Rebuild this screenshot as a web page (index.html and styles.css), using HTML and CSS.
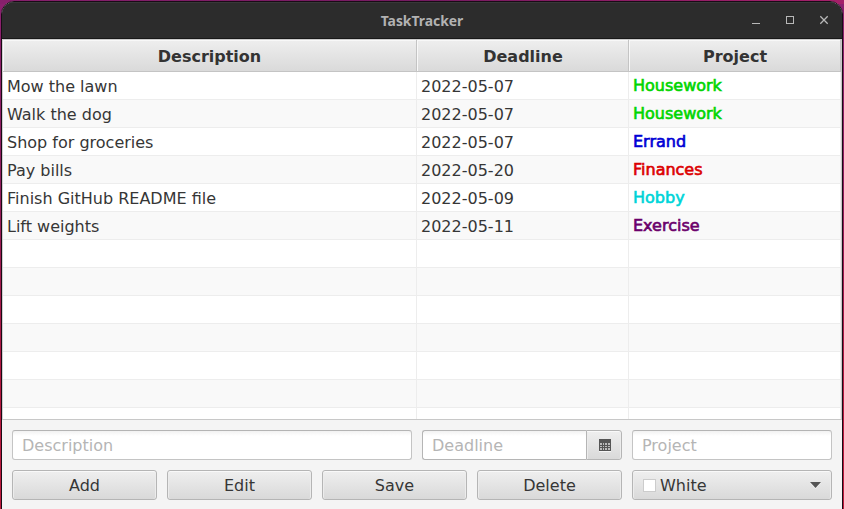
FILE: index.html
```
<!DOCTYPE html>
<html lang="en">
<head>
<meta charset="utf-8">
<title>TaskTracker</title>
<link rel="stylesheet" href="styles.css">
</head>
<body>
<div class="window">
  <header class="titlebar">
    <div class="title">TaskTracker</div>
    <svg class="controls" width="90" height="20" viewBox="0 0 90 20">
      <path d="M7 12.500h8" />
      <rect x="41.500" y="5.500" width="7" height="7" />
      <path class="close" d="M75.300 5.300l7.400 7.400M82.700 5.300l-7.400 7.400" />
    </svg>
  </header>
  <main class="content">
    <div class="table">
      <div class="row head"><div>Description</div><div>Deadline</div><div>Project</div></div>
      <div class="row"><div>Mow the lawn</div><div>2022-05-07</div><div class="tag green">Housework</div></div>
      <div class="row"><div>Walk the dog</div><div>2022-05-07</div><div class="tag green">Housework</div></div>
      <div class="row"><div>Shop for groceries</div><div>2022-05-07</div><div class="tag blue">Errand</div></div>
      <div class="row"><div>Pay bills</div><div>2022-05-20</div><div class="tag red">Finances</div></div>
      <div class="row"><div>Finish GitHub README file</div><div>2022-05-09</div><div class="tag cyan">Hobby</div></div>
      <div class="row"><div>Lift weights</div><div>2022-05-11</div><div class="tag purple">Exercise</div></div>
      <div class="row"><div></div><div></div><div></div></div>
      <div class="row"><div></div><div></div><div></div></div>
      <div class="row"><div></div><div></div><div></div></div>
      <div class="row"><div></div><div></div><div></div></div>
      <div class="row"><div></div><div></div><div></div></div>
      <div class="row"><div></div><div></div><div></div></div>
      <div class="row"><div></div><div></div><div></div></div>
    </div>
    <div class="form">
      <div class="fields">
        <div class="field">Description</div>
        <div class="date">
          <div class="field">Deadline</div>
          <div class="picker">
            <svg width="12" height="13" viewBox="0 0 12 13">
              <path class="shine" d="M0 12h12v1H0z" />
              <path class="cal" d="M0 0h12v12H0z" />
              <path class="days" d="M1 4h2v2H1zM4 4h1v2H4zM6 4h2v2H6zM9 4h2v2H9zM1 7h2v1H1zM4 7h1v1H4zM6 7h2v1H6zM9 7h2v1H9zM1 9h2v2H1zM4 9h1v2H4zM6 9h2v2H6zM9 9h2v2H9z" />
            </svg>
          </div>
        </div>
        <div class="field">Project</div>
      </div>
      <div class="actions">
        <div class="button">Add</div>
        <div class="button">Edit</div>
        <div class="button">Save</div>
        <div class="button">Delete</div>
        <div class="button combo"><span class="swatch"></span><span>White</span>
          <svg class="arrow" width="11" height="7" viewBox="0 0 11 7"><path class="shine" d="M0 1h11L5.500 7z"/><path class="tri" d="M0 0h11L5.500 6z"/></svg>
        </div>
      </div>
    </div>
  </main>
</div>
</body>
</html>
```
FILE: styles.css
```
* { box-sizing: border-box; }
body {
  margin: 0;
  height: 509px;
  overflow: hidden;
  padding: 1px 1px 0;
  background: linear-gradient(90deg, #87206c, #751b61 50%, #a52069) 0 0 / 100% 4px no-repeat,
    linear-gradient(180deg, #8b2170, #8f1c5c 35%, #b3173f 75%, #bd1a3c);
  font: 16px/28px "DejaVu Sans", sans-serif;
  color: #363636;
}
.window {
  height: 520px;
  border: 1px solid #190b16;
  border-radius: 13px 13px 0 0;
  overflow: hidden;
  background: #f4f4f4;
}
.titlebar {
  height: 37px;
  display: grid;
  grid-template-columns: 90px 1fr 90px;
  align-items: center;
  background: #2c2c2c;
  border-top: 1px solid #383838;
  border-bottom: 1px solid #181818;
}
.title {
  grid-column: 2;
  text-align: center;
  font: bold 13.900px/20px "Noto Sans", sans-serif;
  color: #b2b2b2;
}
.controls { fill: none; stroke: #b8b8b8; stroke-width: 1; margin-left: -7px; }
.close { stroke-width: 1.300; }
.table {
  height: 381px;
  overflow: hidden;
  border: 1px solid #c8c8c8;
  border-left-color: #d0d0d0;
  border-top: 0;
  background: #fff;
}
.row {
  height: 28px;
  display: grid;
  grid-template-columns: 414px 212px 212px;
  grid-template-rows: 100%;
  line-height: 24px;
}
.row > div {
  padding: 3px 0 0 4px;
  border-right: 1px solid #ededed;
  border-bottom: 1px solid #ededed;
}
.row:nth-child(odd) { background: #f9f9f9; }
.row.head {
  height: 33px;
  font-weight: bold;
  color: #333;
  background: linear-gradient(#efefef, #d9d9d9);
}
.row.head > div {
  padding: 5px 0 0;
  text-align: center;
  border-right-color: #c4c4c4;
  border-bottom-color: #c4c4c4;
  border-top: 1px solid #ccc;
  box-shadow: inset 1px 1px #f8f8f8;
}
.row.head > div + div { padding-left: 1px; }
.row > .tag { padding-top: 2px; -webkit-text-stroke: .65px; }
.green { color: #00d500; }
.blue { color: #0000d5; }
.red { color: #dc0000; }
.row > .cyan { color: #00c9cc; -webkit-text-stroke: .65px #00dce0; }
.purple { color: #6b006b; }
.form { padding: 10px; display: grid; gap: 10px; }
.fields { display: grid; grid-template-columns: 400px 200px 200px; gap: 10px; }
.actions { display: grid; grid-template-columns: repeat(4, 145px) 200px; gap: 10px; }
.field {
  height: 30px;
  padding: 1px 9px;
  border: 1px solid #c4c4c4;
  border-top-color: #b4b4b4;
  border-radius: 3px;
  background: linear-gradient(#f2f2f2, #fff 5px);
  color: #b5b5b5;
}
.date { display: grid; grid-template-columns: 164px 36px; }
.date .field { border-color: #b5b5b5; border-right: 0; border-radius: 3px 0 0 3px; }
.button, .picker {
  height: 30px;
  border: 1px solid #b5b5b5;
  border-radius: 3px;
  background: linear-gradient(#efefef, #d9d9d9);
  box-shadow: inset 0 1px #f9f9f9, inset 1px 0 #ececec, inset -1px 0 #ececec;
  text-align: center;
  padding-top: 1px;
}
.picker { border-radius: 0 3px 3px 0; display: flex; align-items: center; justify-content: center; padding-left: 2px; }
.picker svg { shape-rendering: crispEdges; }
.cal, .tri { fill: #555; }
.days { fill: #bbb; }
.shine { fill: #f5f5f5; }
.combo { display: flex; align-items: center; padding: 1px 10px 0; }
.swatch { width: 13px; height: 13px; border: 1px solid #ccc; background: #fff; margin-right: 4px; }
.arrow { margin-left: auto; }
```
